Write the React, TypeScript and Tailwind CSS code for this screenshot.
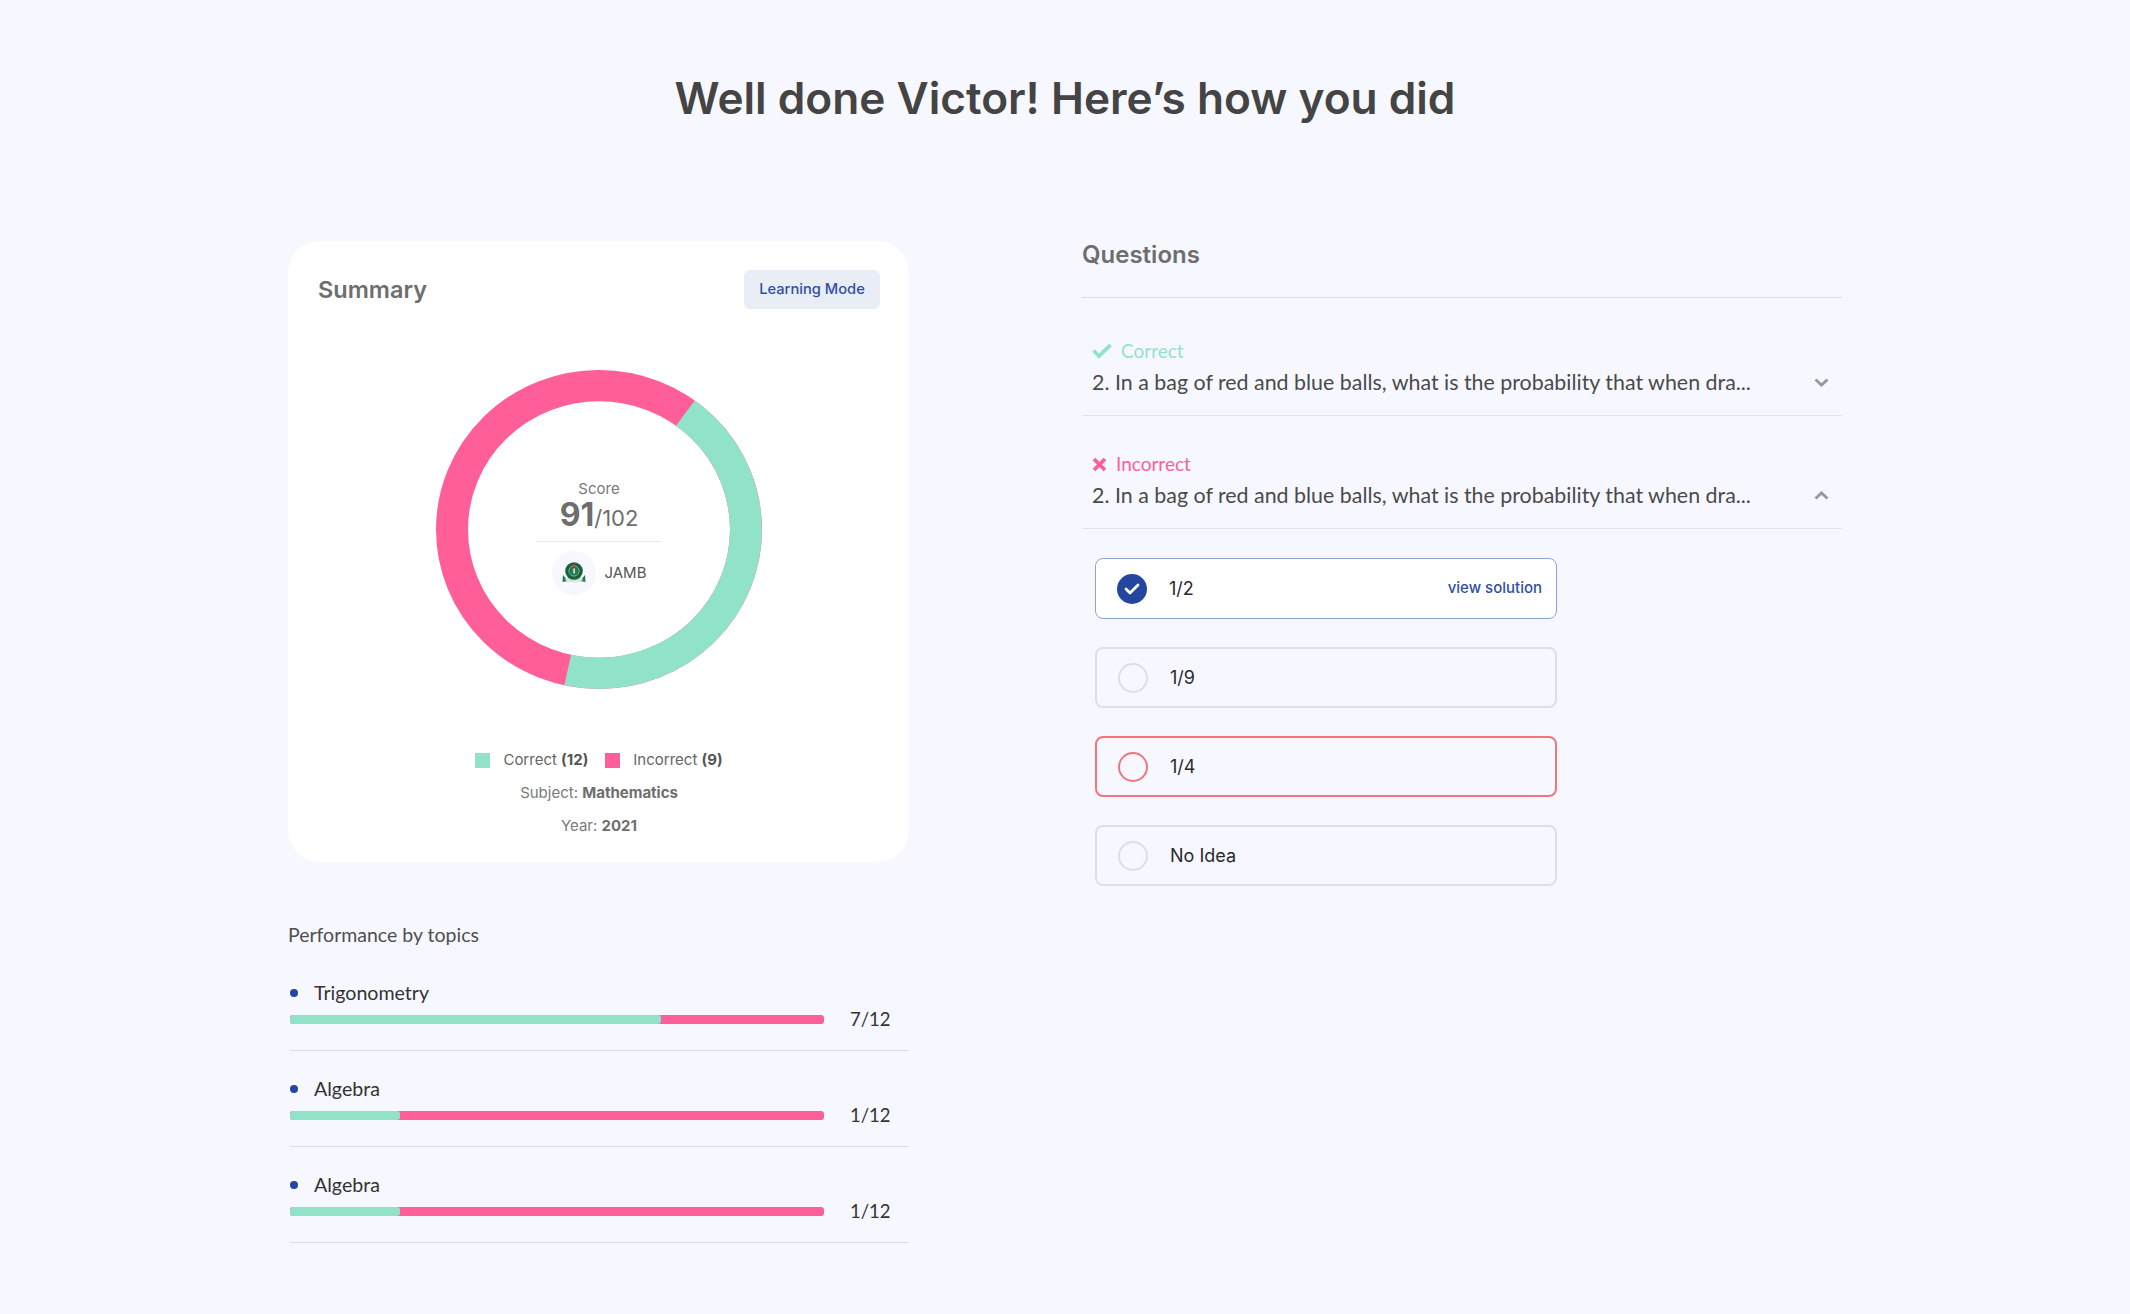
const topics = [
  { name: "Trigonometry", done: 69.5, score: "7/12" },
  { name: "Algebra", done: 20.6, score: "1/12" },
  { name: "Algebra", done: 20.6, score: "1/12" },
];

const question = "2. In a bag of red and blue balls, what is the probability that when dra...";

function Donut() {
  return (
    <svg width="326" height="319" viewBox="0 0 326 326" preserveAspectRatio="none" className="block">
      <circle cx="163" cy="163" r="147" fill="none" stroke="#ff5e99" strokeWidth="32" />
      {/* green arc runs clockwise from 36deg to 192deg */}
      <path d="M 249.4 44.1 A 147 147 0 0 1 131.7 306.6" fill="none" stroke="#90e3c9" strokeWidth="32" />
    </svg>
  );
}

function JambLogo() {
  return (
    <svg width="24" height="22" viewBox="0 0 24 22">
      <path d="M1 13 L0.5 20 L6 19 Z M23 13 L23.5 20 L18 19 Z" fill="#1f7a4a" />
      <path d="M3 18 Q12 23 21 18 L20 16 L4 16 Z" fill="#d5e5da" />
      <circle cx="12" cy="9" r="8.8" fill="#17633d" />
      <circle cx="12" cy="9" r="5" fill="none" stroke="#a9c9b5" strokeWidth="0.8" />
      <circle cx="12" cy="9" r="3.6" fill="#2a7f52" />
      <rect x="11.4" y="6.5" width="1.4" height="5" fill="#eef4f0" />
      <circle cx="12" cy="3.6" r="1.5" fill="#e0343a" />
    </svg>
  );
}

function Chevron({ up }: { up?: boolean }) {
  return (
    <svg width="15" height="9" viewBox="0 0 15 9" fill="none">
      <path d={up ? "M1.5 7.5 L7.5 2 L13.5 7.5" : "M1.5 1.5 L7.5 7 L13.5 1.5"} stroke="#999999" strokeWidth="3" />
    </svg>
  );
}

function Option({ label, state }: { label: string; state?: "selected" | "wrong" }) {
  const box =
    state === "selected"
      ? "border-[1.5px] border-[#8fa3d6] bg-white"
      : state === "wrong"
        ? "border-2 border-[#f2757a]"
        : "border-2 border-[#dcdfea]";
  return (
    <div className={`flex h-[61px] w-[462px] items-center rounded-lg pl-[21px] pr-[14px] ${box}`}>
      {state === "selected" ? (
        <span className="flex h-[30px] w-[30px] items-center justify-center rounded-full bg-[#23479f]">
          <svg width="18" height="14" viewBox="0 0 18 14" fill="none">
            <path d="M3 7 L7 11 L15 3" stroke="white" strokeWidth="2.8" strokeLinecap="round" strokeLinejoin="round" />
          </svg>
        </span>
      ) : (
        <span className={`h-[30px] w-[30px] rounded-full border-2 ${state === "wrong" ? "border-[#f2757a]" : "border-[#dcdfea]"}`} />
      )}
      <span className="ml-[22px] text-[18px] text-[#2b2b2b]">{label}</span>
      {state === "selected" && <span className="ml-auto text-[15px] font-medium text-[#2f4fa3]">view solution</span>}
    </div>
  );
}

function QuestionRow({ correct, open }: { correct: boolean; open: boolean }) {
  return (
    <div className="border-b border-[#e3e5ee] pb-[18px] pl-[10px] pr-[13px]">
      <div className={`flex h-[24px] items-center text-[19px] font-['Lato',sans-serif] ${correct ? "text-[#90e3c9]" : "text-[#ff5e99]"}`}>
        {correct ? (
          <svg width="20" height="16" viewBox="0 0 20 16" fill="none" className="mr-[9px]">
            <path d="M1.5 7.5 L7 13 L18.5 1.8" stroke="#90e3c9" strokeWidth="3.8" />
          </svg>
        ) : (
          <svg width="15" height="15" viewBox="0 0 15 15" fill="none" className="mr-[9px]">
            <path d="M2 2 L13 13 M13 2 L2 13" stroke="#ff5e99" strokeWidth="3.8" />
          </svg>
        )}
        {correct ? "Correct" : "Incorrect"}
      </div>
      <div className="mt-[4px] flex items-center justify-between font-['Lato',sans-serif] text-[21.4px] leading-[30px] text-[#4a4a4a]">
        <span>{question}</span>
        <Chevron up={open} />
      </div>
    </div>
  );
}

export default function App() {
  return (
    <div className="min-h-[1314px] bg-[#f7f8ff] font-['Inter',sans-serif]">
      <h1 className="pt-[70px] text-center text-[44.2px] font-semibold leading-[56px] text-[#444444]">
        Well done Victor! Here’s how you did
      </h1>

      <div className="mt-[115px] flex items-start pl-[288px]">
        <div className="w-[621px]">
          <div className="flex h-[621px] flex-col rounded-[32px] bg-white pl-[30px] pr-[29px] pt-[29px]">
            <div className="flex items-center justify-between">
              <span className="text-[23.5px] font-semibold text-[#6e6e6e]">Summary</span>
              <span className="flex h-[39px] w-[136px] items-center justify-center rounded-md bg-[#e8edf6] text-[14.7px] font-medium text-[#2f4fa3]">
                Learning Mode
              </span>
            </div>
            <div className="relative mx-auto mt-[61px]">
              <Donut />
              <div className="absolute inset-0 flex flex-col items-center pt-[108px]">
                <span className="text-[15px] leading-[22px] text-[#7a7a7a]">Score</span>
                <span className="leading-[30px] text-[#6e6e6e]">
                  <span className="text-[32px] font-bold">91</span>
                  <span className="text-[22px]">/102</span>
                </span>
                <div className="mt-[6px] h-px w-[126px] bg-[#e8e8e8]" />
                <div className="mt-[9px] flex items-center">
                  <span className="flex h-[44px] w-[44px] items-center justify-center rounded-full bg-[#f7f8ff]">
                    <JambLogo />
                  </span>
                  <span className="ml-[9px] text-[15px] text-[#555]">JAMB</span>
                </div>
              </div>
            </div>
            <div className="mt-[61px] flex flex-col items-center text-[15px] text-[#7a7a7a]">
              <div className="flex h-[20px] items-center text-[#666]">
                <span className="h-[15px] w-[15px] bg-[#90e3c9]" />
                <span className="ml-[13px]">
                  Correct <b className="font-bold text-[#555]">(12)</b>
                </span>
                <span className="ml-[17px] h-[15px] w-[15px] bg-[#ff5e99]" />
                <span className="ml-[13px]">
                  Incorrect <b className="font-bold text-[#555]">(9)</b>
                </span>
              </div>
              <div className="mt-[12px] h-[20px]">
                Subject: <b className="font-bold text-[#6e6e6e]">Mathematics</b>
              </div>
              <div className="mt-[13px] h-[20px]">
                Year: <b className="font-bold text-[#6e6e6e]">2021</b>
              </div>
            </div>
          </div>

          <div className="mt-[60px] font-['Lato',sans-serif] text-[19.5px] leading-[26px] text-[#4f4f4f]">Performance by topics</div>
          <div className="mt-[32px] pl-[2px] font-['Lato',sans-serif]">
            {topics.map((t, i) => (
              <div key={i} className={`border-b-[1.5px] border-[#d8dde9] ${i === 0 ? "h-[71px]" : "h-[96px] pt-[25px]"}`}>
                <div className="flex items-center text-[19.6px] leading-[26px] text-[#333]">
                  <span className="h-2 w-2 rounded-full bg-[#23479f]" />
                  <span className="ml-[16px]">{t.name}</span>
                </div>
                <div className="flex items-center">
                  <div className="flex h-[9px] w-[534px] overflow-hidden rounded-[3px] bg-[#ff5e99]">
                    <div className="h-full rounded-[3px] bg-[#90e3c9]" style={{ width: `${t.done}%` }} />
                  </div>
                  <span className="ml-[26px] text-[18.5px] leading-[26px] text-[#333]">{t.score}</span>
                </div>
              </div>
            ))}
          </div>
        </div>

        <div className="ml-[173px] mt-[-1px] w-[760px]">
          <div className="border-b-[1.5px] border-[#dcdde3] pb-[27px] text-[24px] font-semibold leading-[30px] text-[#6e6e6e]">Questions</div>
          <div className="mt-[41px]">
            <QuestionRow correct open={false} />
          </div>
          <div className="mt-[36px]">
            <QuestionRow correct={false} open />
          </div>
          <div className="ml-[13px] mt-[29px] flex flex-col gap-[28px]">
            <Option label="1/2" state="selected" />
            <Option label="1/9" />
            <Option label="1/4" state="wrong" />
            <Option label="No Idea" />
          </div>
        </div>
      </div>
    </div>
  );
}
